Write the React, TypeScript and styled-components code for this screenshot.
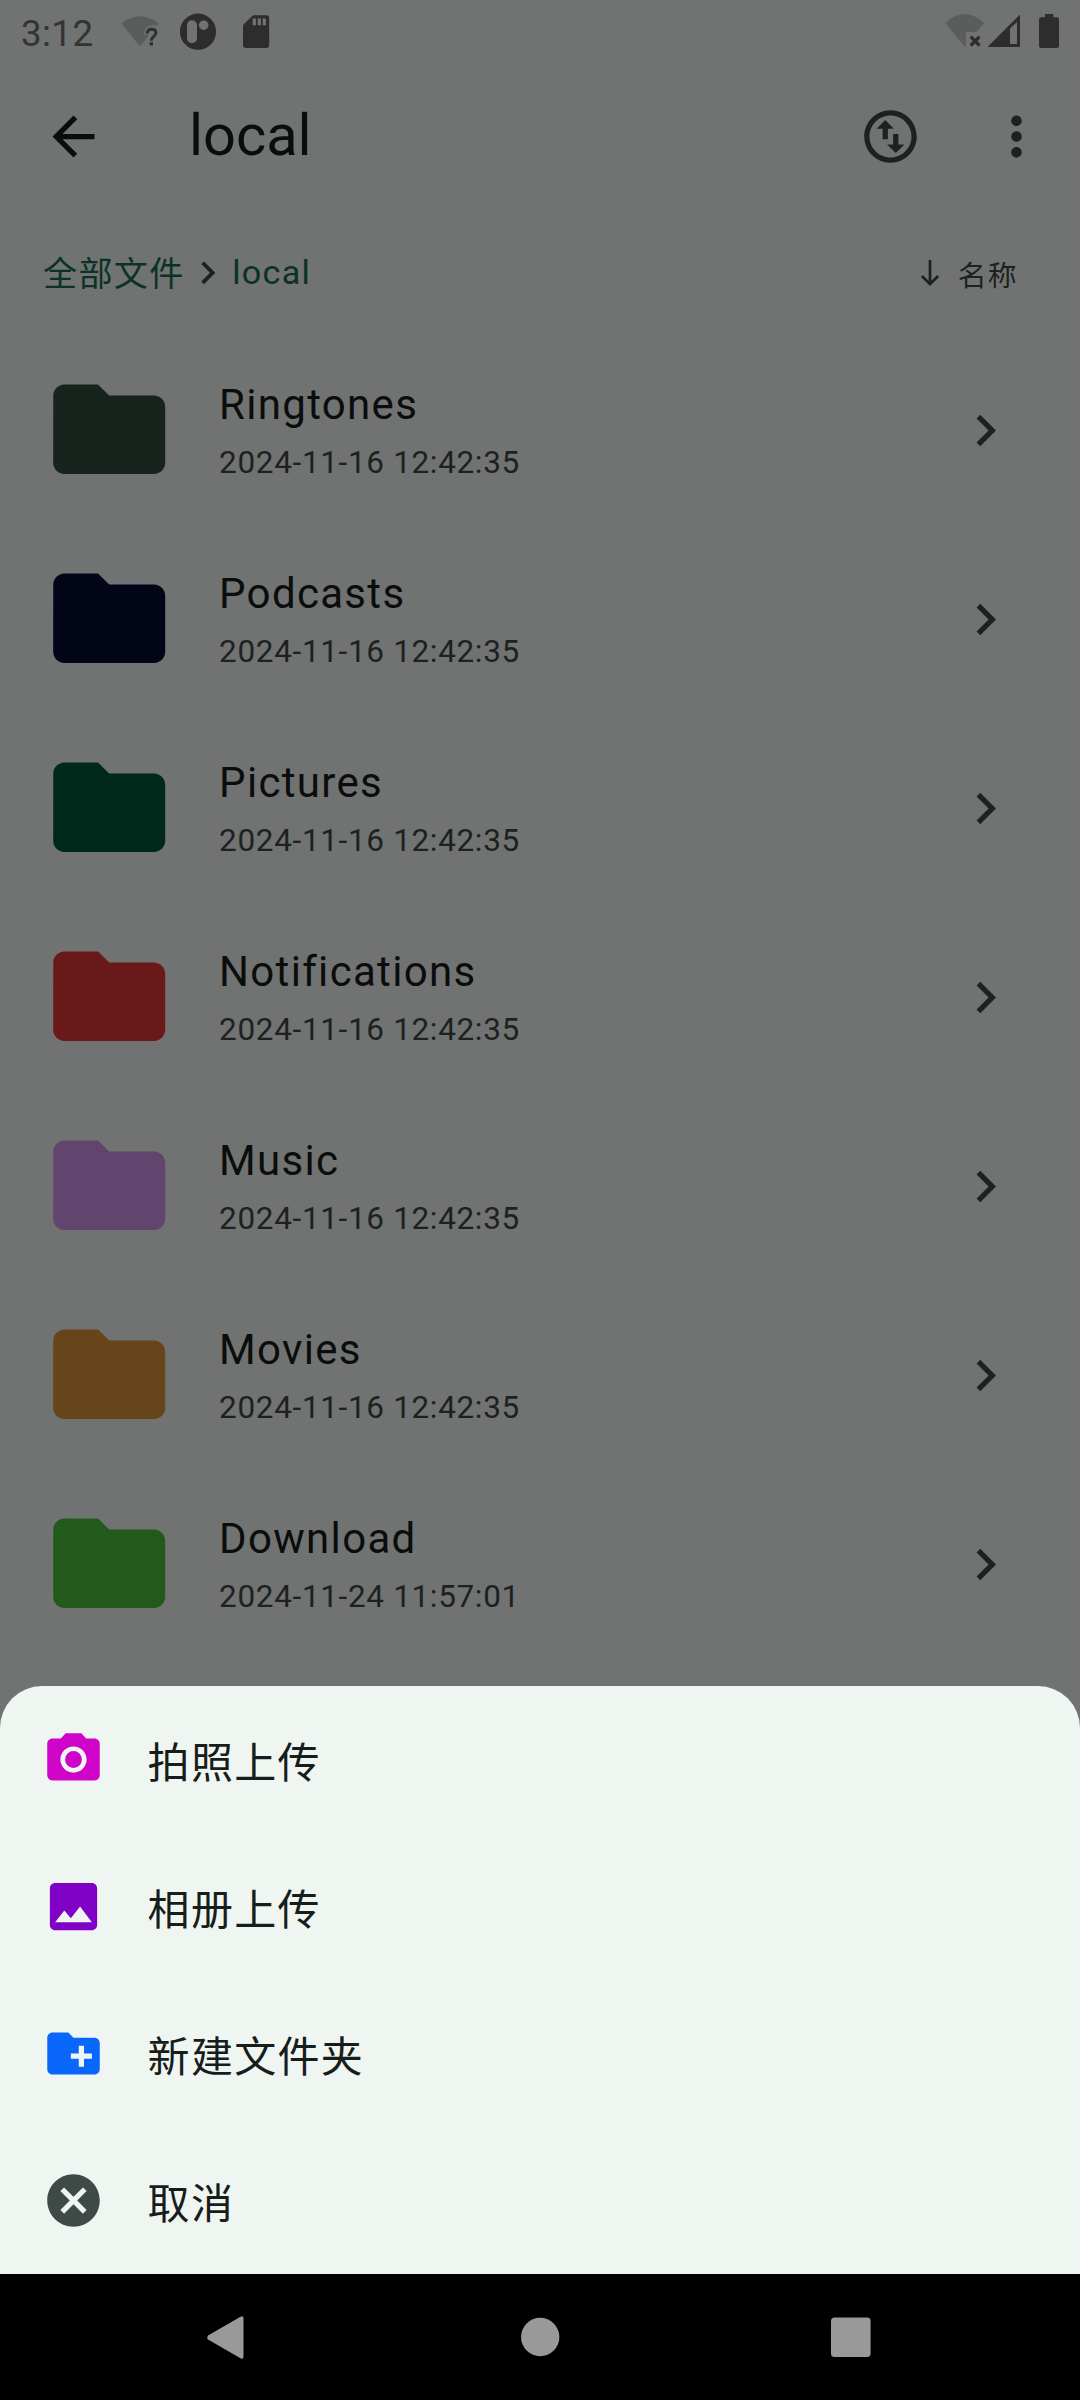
import React from "react";
import styled, { createGlobalStyle } from "styled-components";

const ink = "#0b0d0c";
const muted = "#1d2220";
const sysDark = "#2d2d2d";
const sysFaint = "#5b5d5c";

const GlobalStyle = createGlobalStyle`
  * { box-sizing: border-box; }
  html, body { margin: 0; padding: 0; background: #000; }
  body { font-family: Roboto, "Noto Sans CJK SC", sans-serif; font-weight: 400; }
  svg { display: block; flex: none; }
`;

const Screen = styled.div`
  width: 1080px;
  height: 2400px;
  display: flex;
  flex-direction: column;
  background: #707371;
  overflow: hidden;
`;

const StatusBar = styled.header`
  height: 63px;
  flex: none;
  display: flex;
  align-items: flex-start;
  justify-content: space-between;
  padding: 0 18px 0 21px;
`;

const StatusGroup = styled.div`
  display: flex;
  align-items: flex-start;
`;

const Clock = styled.span`
  width: 98px;
  padding-top: 12px;
  font-size: 36.75px;
  line-height: 44px;
  letter-spacing: 0.4px;
  color: #333434;
`;

const AppBar = styled.div`
  height: 147px;
  flex: none;
  display: flex;
  align-items: center;
  padding: 0 32px 0 42px;
`;

const Title = styled.h1`
  flex: 1;
  margin: 0 0 0 84px;
  padding-bottom: 4px;
  font-size: 57.75px;
  line-height: 74px;
  font-weight: 400;
  color: ${ink};
`;

const Actions = styled.div`
  display: flex;
  gap: 63px;
`;

const PathBar = styled.nav`
  height: 126px;
  flex: none;
  display: flex;
  align-items: center;
  justify-content: space-between;
  padding: 0 62px 0 43px;
`;

const Crumbs = styled.div`
  display: flex;
  align-items: center;
`;

const Crumb = styled.span<{ $latin?: boolean }>`
  padding: ${(p) => (p.$latin ? "0 0 2px 2px" : "2px 0 0")};
  font-size: 34.125px;
  line-height: 50px;
  letter-spacing: 1.3125px;
  color: #0a3226;
`;

const Sort = styled.div`
  display: flex;
  align-items: center;
  gap: 18px;
  font-size: 28.875px;
  line-height: 42px;
  letter-spacing: 1.3125px;
  color: ${muted};
`;

const SortLabel = styled.span`
  padding-top: 5px;
`;

const FileList = styled.ul`
  flex: 1;
  min-height: 0;
  margin: 0;
  padding: 0;
  list-style: none;
  overflow: hidden;
`;

const FileRow = styled.li`
  height: 189px;
  display: flex;
  align-items: center;
  padding: 0 63px 0 42px;
`;

const FolderSlot = styled.div`
  padding-bottom: 2.6px;
`;

const FileText = styled.div`
  flex: 1;
  margin-left: 42.7px;
  padding-bottom: 5px;
`;

const FileName = styled.div`
  font-size: 42px;
  line-height: 63px;
  letter-spacing: 1.3125px;
  color: ${ink};
`;

const FileDate = styled.div`
  margin-top: 6px;
  font-size: 31.5px;
  line-height: 42px;
  letter-spacing: 0.656px;
  color: ${muted};
`;

const Sheet = styled.section`
  flex: none;
  border-radius: 42px 42px 0 0;
  background: #eff5f1;
`;

const SheetItem = styled.div`
  height: 147px;
  display: flex;
  align-items: center;
  gap: 42.6px;
  padding: 0 42px;
`;

const SheetLabel = styled.span`
  padding-top: 7px;
  font-size: 42px;
  line-height: 63px;
  letter-spacing: 1.3125px;
  color: #171d1a;
`;

const NavBar = styled.footer`
  height: 126px;
  flex: none;
  display: flex;
  align-items: center;
  justify-content: space-between;
  padding: 0 198px 0 194px;
  background: #000;
`;

type IconProps = { d: string; size?: number; color?: string };

const Icon = ({ d, size = 63, color = muted }: IconProps) => (
  <svg width={size} height={size} viewBox="0 0 24 24" fill={color}>
    <path d={d} fillRule="evenodd" />
  </svg>
);

const paths = {
  back: "M20 11H7.83l5.59-5.59L12 4l-8 8 8 8 1.41-1.41L7.83 13H20v-2z",
  more: "M12 8c1.1 0 2-.9 2-2s-.9-2-2-2-2 .9-2 2 .9 2 2 2zm0 2c-1.1 0-2 .9-2 2s.9 2 2 2 2-.9 2-2-.9-2-2-2zm0 6c-1.1 0-2 .9-2 2s.9 2 2 2 2-.9 2-2-.9-2-2-2z",
  swap: "M12 2C6.48 2 2 6.48 2 12s4.48 10 10 10 10-4.48 10-10S17.52 2 12 2zm0 18c-4.41 0-8-3.59-8-8s3.59-8 8-8 8 3.59 8 8-3.59 8-8 8zM6.7 9L10 5.7 13.3 9H11v4H9V9H6.7zM17.3 15L14 18.3 10.7 15H13v-4h2v4h2.3z",
  chevron: "M10 6L8.59 7.41 13.17 12l-4.58 4.59L10 18l6-6z",
  folder: "M10 4H4c-1.1 0-1.99.9-1.99 2L2 18c0 1.1.9 2 2 2h16c1.1 0 2-.9 2-2V8c0-1.1-.9-2-2-2h-8l-2-2z",
  camera: "M9 2L7.17 4H4c-1.1 0-2 .9-2 2v12c0 1.1.9 2 2 2h16c1.1 0 2-.9 2-2V6c0-1.1-.9-2-2-2h-3.17L15 2H9zm3 15c-2.76 0-5-2.24-5-5s2.24-5 5-5 5 2.24 5 5-2.24 5-5 5zM12 8.8a3.2 3.2 0 1 0 0 6.4 3.2 3.2 0 0 0 0-6.4z",
  image: "M21 19V5c0-1.1-.9-2-2-2H5c-1.1 0-2 .9-2 2v14c0 1.1.9 2 2 2h14c1.1 0 2-.9 2-2zM8.5 13.5l2.5 3.01L14.5 12l4.5 6H5l3.5-4.5z",
  newFolder: "M20 6h-8l-2-2H4c-1.11 0-1.99.89-1.99 2L2 18c0 1.11.89 2 2 2h16c1.11 0 2-.89 2-2V8c0-1.11-.89-2-2-2zm-1 8h-3v3h-2v-3h-3v-2h3V9h2v3h3v2z",
  cancel: "M12 2C6.47 2 2 6.47 2 12s4.47 10 10 10 10-4.47 10-10S17.53 2 12 2zm5 13.59L15.59 17 12 13.41 8.41 17 7 15.59 10.59 12 7 8.41 8.41 7 12 10.59 15.59 7 17 8.41 13.41 12 17 15.59z",
};

const LeftStatusIcons = () => (
  <svg width="170" height="63" viewBox="119 0 170 63">
    <path d="M121.3 23.2Q140 9.500 158.7 23.2L157 25.500Q144.500 23.500 143.800 34.500H148L148 36.500L140 46.500Z" fill={sysFaint} />
    <path d="M147.200 33.500Q147.400 29.200 151.500 29.200Q155.900 29.200 155.900 32.800Q155.900 34.800 153.600 36.600Q151.300 38.400 151.300 40.800" fill="none" stroke="#303131" strokeWidth="3" />
    <rect x="149.700" y="42.200" width="3.300" height="3.300" fill="#303131" />
    <path
      fillRule="evenodd"
      fill={sysDark}
      d="M198 13.6a18.1 18.1 0 1 0 0 36.2a18.1 18.1 0 1 0 0-36.2zM192 20.3a5 5 0 0 1 5 5v13a5 5 0 0 1-10 0v-13a5 5 0 0 1 5-5zM203.7 20.4a4.8 4.8 0 1 1 0 9.6a4.8 4.8 0 1 1 0-9.6z"
    />
    <path
      fillRule="evenodd"
      fill={sysDark}
      d="M253 15.3H266a3.2 3.2 0 0 1 3.2 3.2V44.800a3.200 3.200 0 0 1-3.200 3.200H246.200a3.200 3.200 0 0 1-3.200-3.200V25zM252.700 18.500v6.700h3.200v-6.700zM257.700 18.500v6.700h3.200v-6.700zM262.700 18.500v6.700h3.200v-6.700z"
    />
  </svg>
);

const RightStatusIcons = () => (
  <svg width="122" height="63" viewBox="940 0 122 63">
    <path d="M945.300 23Q964.700 5.200 984 23L976.500 32H966V46.500H964.500Z" fill={sysFaint} />
    <path d="M970.700 36.700L979.500 45.500M979.500 36.700L970.700 45.500" stroke={sysDark} strokeWidth="3.300" />
    <path fillRule="evenodd" fill={sysDark} d="M1020 14.500V47H987.500zM1010 28.500V44H1017V22z" />
    <path fill={sysDark} d="M1045 14h8.300v3.300h3.500a2.200 2.200 0 0 1 2.200 2.200V45.700a2.200 2.200 0 0 1-2.200 2.200H1041.200a2.200 2.200 0 0 1-2.200-2.200V19.500a2.200 2.200 0 0 1 2.200-2.200H1045z" />
  </svg>
);

const files = [
  { name: "Ringtones", date: "2024-11-16 12:42:35", color: "#16241d" },
  { name: "Podcasts", date: "2024-11-16 12:42:35", color: "#010517" },
  { name: "Pictures", date: "2024-11-16 12:42:35", color: "#00291c" },
  { name: "Notifications", date: "2024-11-16 12:42:35", color: "#6a191a" },
  { name: "Music", date: "2024-11-16 12:42:35", color: "#62456f" },
  { name: "Movies", date: "2024-11-16 12:42:35", color: "#654519" },
  { name: "Download", date: "2024-11-24 11:57:01", color: "#225a1c" },
];

const actions = [
  { label: "拍照上传", icon: paths.camera, color: "#d004c8" },
  { label: "相册上传", icon: paths.image, color: "#7f02c6" },
  { label: "新建文件夹", icon: paths.newFolder, color: "#0a67fb" },
  { label: "取消", icon: paths.cancel, color: "#3f4945" },
];

export default function App() {
  return (
    <>
      <GlobalStyle />
      <Screen>
        <StatusBar>
          <StatusGroup>
            <Clock>3:12</Clock>
            <LeftStatusIcons />
          </StatusGroup>
          <RightStatusIcons />
        </StatusBar>
        <AppBar>
          <Icon d={paths.back} color={ink} />
          <Title>local</Title>
          <Actions>
            <Icon d={paths.swap} />
            <Icon d={paths.more} />
          </Actions>
        </AppBar>
        <PathBar>
          <Crumbs>
            <Crumb>全部文件</Crumb>
            <Icon d={paths.chevron} size={45.5} />
            <Crumb $latin>local</Crumb>
          </Crumbs>
          <Sort>
            <svg width="20" height="28" viewBox="0 0 20 28" fill="none" stroke={muted} strokeWidth="2.7">
              <path d="M10 1V25.500M1.900 17L10 25.200L18.100 17" />
            </svg>
            <SortLabel>名称</SortLabel>
          </Sort>
        </PathBar>
        <FileList>
          {files.map((f) => (
            <FileRow key={f.name}>
              <FolderSlot>
                <Icon d={paths.folder} size={134.4} color={f.color} />
              </FolderSlot>
              <FileText>
                <FileName>{f.name}</FileName>
                <FileDate>{f.date}</FileDate>
              </FileText>
              <Icon d={paths.chevron} />
            </FileRow>
          ))}
        </FileList>
        <Sheet>
          {actions.map((a) => (
            <SheetItem key={a.label}>
              <Icon d={a.icon} color={a.color} />
              <SheetLabel>{a.label}</SheetLabel>
            </SheetItem>
          ))}
        </Sheet>
        <NavBar>
          <svg width="63" height="63" viewBox="194 2305.500 63 63" fill="#999">
            <path d="M208 2335L240.500 2316.200Q243.500 2314.600 243.500 2318V2356Q243.500 2359.400 240.500 2357.800L208 2339Q206.500 2337 208 2335Z" />
          </svg>
          <svg width="63" height="63" viewBox="0 0 63 63" fill="#999">
            <circle cx="33.200" cy="31" r="19.200" />
          </svg>
          <svg width="63" height="63" viewBox="0 0 63 63" fill="#999">
            <rect x="12" y="11.500" width="39.600" height="39.600" rx="3.500" />
          </svg>
        </NavBar>
      </Screen>
    </>
  );
}
